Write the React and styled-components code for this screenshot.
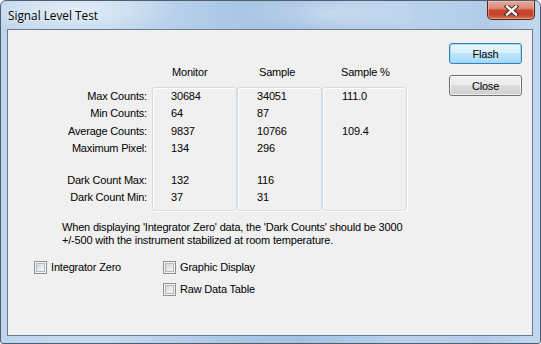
import React from 'react';
import styled, { createGlobalStyle } from 'styled-components';

const GlobalStyle = createGlobalStyle`
  html, body {
    margin: 0;
    padding: 0;
    background: #ffffff;
  }
  body {
    font-family: "Liberation Sans", Arial, sans-serif;
    font-size: 11px;
    letter-spacing: -0.18px;
    color: #000;
  }
`;

const Window = styled.div`
  width: 541px;
  height: 344px;
  box-sizing: border-box;
  display: flex;
  flex-direction: column;
  border: 1px solid #505f70;
  border-radius: 6px 6px 3px 3px;
  overflow: hidden;
  background:
    radial-gradient(ellipse 110px 26px at 70px 8px, rgba(255, 255, 255, 0.5), rgba(255, 255, 255, 0) 100%),
    radial-gradient(ellipse 90px 22px at 330px 12px, rgba(255, 255, 255, 0.35), rgba(255, 255, 255, 0) 100%),
    linear-gradient(90deg, #bdd4ed 0%, #c6dbf0 18%, #acc8e6 42%, #a2c1e2 55%, #bad3ec 75%, #b2cce8 90%, #c2d8ee 100%);
`;

const TitleBar = styled.div`
  height: 28px;
  display: flex;
  align-items: flex-start;
  padding: 0 5px 0 7px;
`;

const Title = styled.span`
  margin-top: 6px;
  font-family: "Open Sans", "Noto Sans", sans-serif;
  font-size: 11.8px;
  letter-spacing: 0;
  line-height: 17px;
  color: #000;
  text-shadow: 0 0 6px rgba(255, 255, 255, 0.9);
`;

const CloseX = styled.div`
  margin-left: auto;
  width: 48px;
  height: 19px;
  box-sizing: border-box;
  border: 1px solid #5e2216;
  border-top: none;
  border-radius: 0 0 5px 5px;
  display: flex;
  align-items: center;
  justify-content: center;
  background: linear-gradient(180deg, #e7a898 0%, #dc8b78 40%, #c9492e 52%, #c2442a 75%, #d8714f 100%);
  box-shadow: inset 0 0 0 1px rgba(255, 210, 190, 0.45);
`;

const Client = styled.div`
  flex: 1;
  margin: 0 7px 7px 6px;
  border: 1px solid #6b7c8e;
  background: #f0f0f0;
  display: flex;
  align-items: flex-start;
`;

const Main = styled.div`
  flex: 1;
  padding-top: 34px;
  display: flex;
  flex-direction: column;
`;

const Table = styled.div`
  display: flex;
  align-items: flex-start;
`;

const LabelColumn = styled.div`
  width: 144px;
  box-sizing: border-box;
  padding: 24px 5px 0 0;
  text-align: right;
`;

const Column = styled.div`
  width: 85px;
  display: flex;
  flex-direction: column;
`;

const Header = styled.div`
  height: 17px;
  line-height: 17px;
  padding-left: ${p => p.indent}px;
  margin-bottom: 6px;
`;

const Box = styled.div`
  box-sizing: border-box;
  border: 1px solid #d3dde4;
  border-radius: 3px;
  box-shadow: inset 1px 1px 0 #ffffff, 1px 1px 0 #ffffff;
  padding: 0 0 3px ${p => p.indent}px;
`;

const Row = styled.div`
  height: 17.3px;
  line-height: 17.3px;
  white-space: nowrap;
`;

const Spacer = styled.div`
  height: 15px;
`;

const Note = styled.div`
  margin-top: 10px;
  padding-left: 54px;
  line-height: 13px;
`;

const Checks = styled.div`
  margin-top: 12px;
  padding-left: 26px;
  display: grid;
  grid-template-columns: 129px auto;
  row-gap: 5px;
`;

const CheckItem = styled.label`
  display: flex;
  align-items: center;
  gap: 4px;
  height: 17px;
  grid-column: ${p => p.col};
`;

const CheckBox = styled.span`
  position: relative;
  width: 13px;
  height: 13px;
  box-sizing: border-box;
  border: 1px solid #8e8f8f;
  background: #f6f6f6;

  &::after {
    content: '';
    position: absolute;
    inset: 1px;
    border: 1px solid #b3b8be;
    background: linear-gradient(135deg, #d6d9dd 0%, #e9eaeb 60%, #f6f6f6 100%);
  }
`;

const Buttons = styled.div`
  width: 73px;
  margin: 13px 10px 0 0;
  display: flex;
  flex-direction: column;
  gap: 11px;
`;

const Button = styled.div`
  height: 21px;
  box-sizing: border-box;
  border: 1px solid ${p => (p.primary ? '#3c7fb1' : '#707070')};
  border-radius: 3px;
  display: flex;
  align-items: center;
  justify-content: center;
  background: ${p =>
    p.primary
      ? 'linear-gradient(180deg, #eaf6fd 0%, #d9f0fc 45%, #bee6fd 50%, #a7d9f5 100%)'
      : 'linear-gradient(180deg, #f2f2f2 0%, #ebebeb 45%, #dddddd 50%, #cfcfcf 100%)'};
  box-shadow: inset 0 0 0 1px ${p => (p.primary ? 'rgba(140, 220, 255, 0.9)' : 'rgba(255, 255, 255, 0.7)')};
`;

const labels = ['Max Counts:', 'Min Counts:', 'Average Counts:', 'Maximum Pixel:', null, 'Dark Count Max:', 'Dark Count Min:'];

const columns = [
  { title: 'Monitor', head: 20, indent: 18, values: ['30684', '64', '9837', '134', null, '132', '37'] },
  { title: 'Sample', head: 22, indent: 19, values: ['34051', '87', '10766', '296', null, '116', '31'] },
  { title: 'Sample %', head: 19, indent: 19, values: ['111.0', '', '109.4', '', null, '', ''] },
];

const CloseGlyph = () => (
  <svg width="15" height="11" viewBox="0 0 15 11">
    <path d="M3 1.5 L12 9.5 M12 1.5 L3 9.5" stroke="#3b2a28" strokeWidth="4.4" strokeLinecap="square" fill="none" />
    <path d="M3 1.5 L12 9.5 M12 1.5 L3 9.5" stroke="#ffffff" strokeWidth="2.4" strokeLinecap="square" fill="none" />
  </svg>
);

const App = () => (
  <>
    <GlobalStyle />
    <Window>
      <TitleBar>
        <Title>Signal Level Test</Title>
        <CloseX>
          <CloseGlyph />
        </CloseX>
      </TitleBar>
      <Client>
        <Main>
          <Table>
            <LabelColumn>
              {labels.map((l, i) => (l === null ? <Spacer key={i} /> : <Row key={i}>{l}</Row>))}
            </LabelColumn>
            {columns.map(c => (
              <Column key={c.title}>
                <Header indent={c.head}>{c.title}</Header>
                <Box indent={c.indent}>
                  {c.values.map((v, i) => (v === null ? <Spacer key={i} /> : <Row key={i}>{v}</Row>))}
                </Box>
              </Column>
            ))}
          </Table>
          <Note>
            When displaying 'Integrator Zero' data, the 'Dark Counts' should be 3000
            <br />
            +/-500 with the instrument stabilized at room temperature.
          </Note>
          <Checks>
            <CheckItem col={1}>
              <CheckBox />
              Integrator Zero
            </CheckItem>
            <CheckItem col={2}>
              <CheckBox />
              Graphic Display
            </CheckItem>
            <CheckItem col={2}>
              <CheckBox />
              Raw Data Table
            </CheckItem>
          </Checks>
        </Main>
        <Buttons>
          <Button primary>Flash</Button>
          <Button>Close</Button>
        </Buttons>
      </Client>
    </Window>
  </>
);

export default App;
